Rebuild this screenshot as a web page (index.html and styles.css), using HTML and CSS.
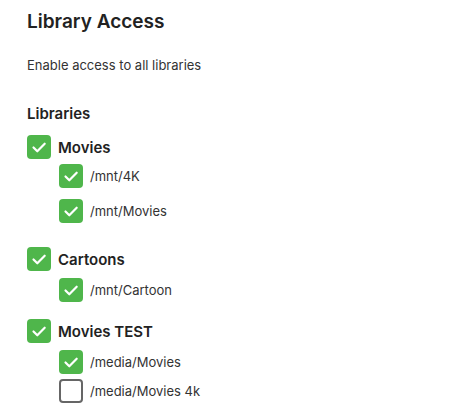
FILE: index.html
```html
<!DOCTYPE html>
<html>
<head>
<meta charset="utf-8">
<link rel="stylesheet" href="styles.css">
</head>
<body>
<div class="page">
  <h1 class="title">Library Access</h1>
  <p class="desc">Enable access to all libraries</p>
  <h2 class="section">Libraries</h2>
  <div class="lib lib-1">
    <div class="row parent"><span class="cb on"><svg viewBox="0 0 24 24"><path d="M6.5 12.5l3.8 3.8 7.4-7.6"/></svg></span><span class="lbl-p">Movies</span></div>
    <div class="row child c-a"><span class="cb on"><svg viewBox="0 0 24 24"><path d="M6.5 12.5l3.8 3.8 7.4-7.6"/></svg></span><span class="lbl-c">/mnt/4K</span></div>
    <div class="row child c-b"><span class="cb on"><svg viewBox="0 0 24 24"><path d="M6.5 12.5l3.8 3.8 7.4-7.6"/></svg></span><span class="lbl-c">/mnt/Movies</span></div>
  </div>
  <div class="lib lib-2">
    <div class="row parent"><span class="cb on"><svg viewBox="0 0 24 24"><path d="M6.5 12.5l3.8 3.8 7.4-7.6"/></svg></span><span class="lbl-p">Cartoons</span></div>
    <div class="row child c-c"><span class="cb on"><svg viewBox="0 0 24 24"><path d="M6.5 12.5l3.8 3.8 7.4-7.6"/></svg></span><span class="lbl-c">/mnt/Cartoon</span></div>
  </div>
  <div class="lib lib-3">
    <div class="row parent"><span class="cb on"><svg viewBox="0 0 24 24"><path d="M6.5 12.5l3.8 3.8 7.4-7.6"/></svg></span><span class="lbl-p">Movies TEST</span></div>
    <div class="row child c-c"><span class="cb on"><svg viewBox="0 0 24 24"><path d="M6.5 12.5l3.8 3.8 7.4-7.6"/></svg></span><span class="lbl-c">/media/Movies</span></div>
    <div class="row child c-d"><span class="cb off"></span><span class="lbl-c">/media/Movies 4k</span></div>
  </div>
</div>
</body>
</html>
```
FILE: styles.css
```css
* { box-sizing: border-box; }
html, body { margin: 0; padding: 0; background: #fff; }
body {
  font-family: Inter, "Noto Sans", sans-serif;
  color: #222;
}
.page {
  padding: 10px 0 0 27px;
}
.title {
  margin: 0;
  font-size: 19px;
  line-height: 24px;
  font-weight: 600;
  color: #222;
}
.desc {
  margin: 23px 0 0 0;
  font-size: 13px;
  line-height: 16px;
  color: #333;
}
.section {
  margin: 32px 0 0 0;
  font-size: 15px;
  line-height: 18px;
  font-weight: 600;
  color: #222;
}
.lib-1 { margin-top: 12px; }
.lib-2 { margin-top: 24px; }
.lib-3 { margin-top: 17px; }
.row {
  display: flex;
  align-items: center;
  height: 24px;
}
.child { padding-left: 32px; }
.c-a { margin-top: 5px; }
.c-b { margin-top: 11px; }
.c-c { margin-top: 7px; }
.c-d { margin-top: 5px; }
.cb {
  width: 24px;
  height: 24px;
  border-radius: 4px;
  flex: none;
  display: block;
}
.cb svg { display: block; width: 24px; height: 24px; }
.cb path {
  fill: none;
  stroke: #fff;
  stroke-width: 2.2;
  stroke-linecap: round;
  stroke-linejoin: round;
}
.cb.on { background: #4fb64b; }
.cb.off { border: 2px solid #666; background: #fff; }
.lbl-p {
  margin-left: 7px;
  font-size: 15px;
  font-weight: 600;
  color: #222;
}
.lbl-c {
  margin-left: 7px;
  font-size: 13px;
  color: #333;
}
```
